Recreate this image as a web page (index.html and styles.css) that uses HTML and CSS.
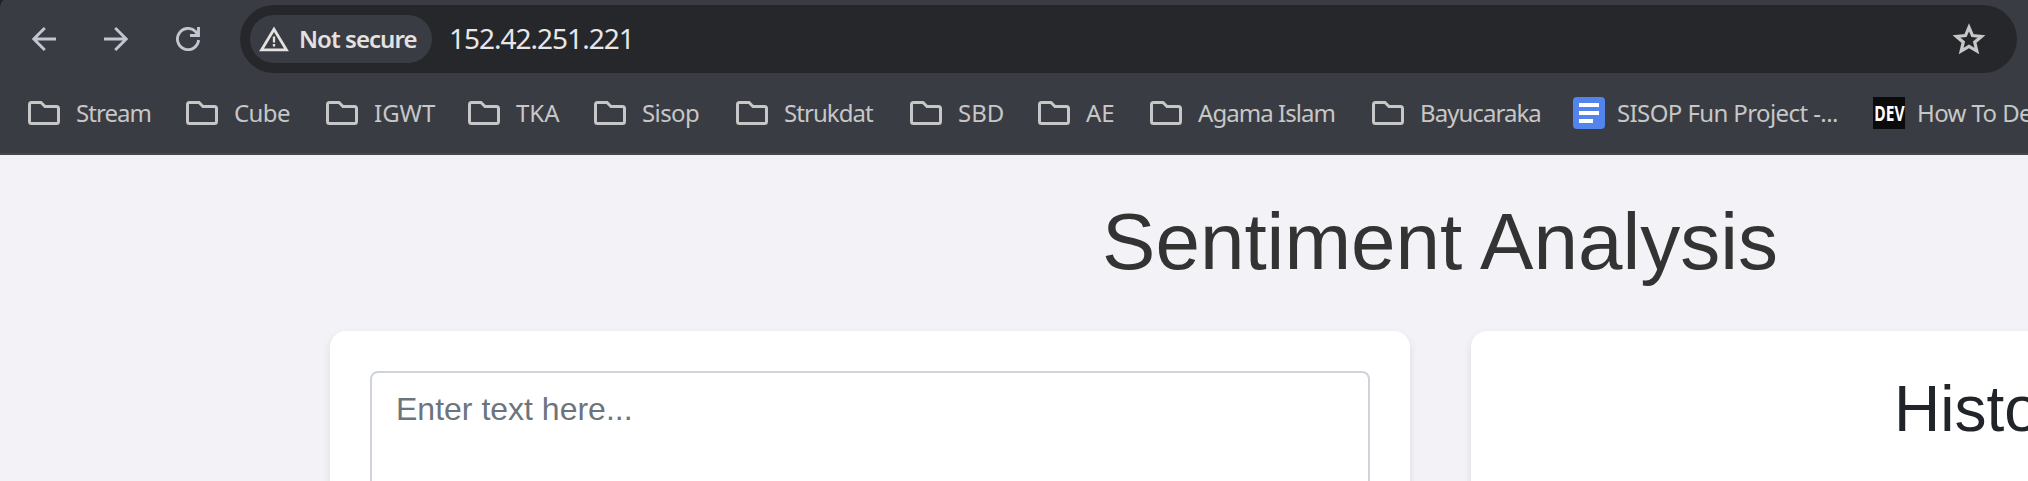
FILE: index.html
```
<!DOCTYPE html>
<html lang="en">
<head>
<meta charset="utf-8">
<title>Sentiment Analysis</title>
<link rel="stylesheet" href="styles.css">
</head>
<body>
<svg class="defs" width="0" height="0"><symbol id="folder" viewBox="0 0 32 24"><path d="M1.5 4V20.5Q1.5 22.5 3.5 22.5H28.5Q30.5 22.5 30.5 20.5V7.5Q30.5 5.5 28.5 5.5H17L13 1.5H3.5Q1.5 1.5 1.5 3.5Z" fill="none" stroke="currentColor" stroke-width="3"/></symbol></svg>
<div class="frame">
<header class="chrome">
  <div class="toolbar">
    <svg class="nav" viewBox="0 0 24 24"><path d="M24 12H2M12.8 1L1.8 12L12.8 23" fill="none" stroke="currentColor" stroke-width="2.9"/></svg>
    <svg class="nav" viewBox="0 0 24 24"><path d="M0 12H22M11.2 1L22.2 12L11.2 23" fill="none" stroke="currentColor" stroke-width="2.9"/></svg>
    <svg class="nav" viewBox="0 0 24 24"><path d="M22.6 13A10.6 10.6 0 1 1 19.6 4.6L22 8M22.5 0V8.5H14" fill="none" stroke="currentColor" stroke-width="2.9"/></svg>
    <div class="omnibox">
      <div class="chip">
        <svg class="warn" viewBox="0 0 30 26"><path d="M15 3.2L27.4 23.8H2.6Z" fill="none" stroke="currentColor" stroke-width="2.8"/><path d="M15 10.5V16.5M15 18V20.5" stroke="currentColor" stroke-width="2.3"/></svg>
        <span class="secure">Not secure</span>
      </div>
      <span class="url">152.42.251.221</span>
      <svg class="star" viewBox="0 0 34 32"><path d="M17 4.3L20.5 12.6L29.5 13.4L22.7 19.2L24.8 28L17 23.3L9.2 28L11.3 19.2L4.5 13.4L13.5 12.6Z" fill="none" stroke="currentColor" stroke-width="3.2"/></svg>
    </div>
  </div>
  <nav class="bookmarks">
    <a class="bm"><svg class="folder"><use href="#folder"/></svg><span class="tight">Stream</span></a>
    <a class="bm"><svg class="folder"><use href="#folder"/></svg><span class="snug">Cube</span></a>
    <a class="bm"><svg class="folder"><use href="#folder"/></svg><span>IGWT</span></a>
    <a class="bm"><svg class="folder"><use href="#folder"/></svg><span>TKA</span></a>
    <a class="bm"><svg class="folder"><use href="#folder"/></svg><span class="snug">Sisop</span></a>
    <a class="bm"><svg class="folder"><use href="#folder"/></svg><span class="tight">Strukdat</span></a>
    <a class="bm"><svg class="folder"><use href="#folder"/></svg><span>SBD</span></a>
    <a class="bm"><svg class="folder"><use href="#folder"/></svg><span>AE</span></a>
    <a class="bm"><svg class="folder"><use href="#folder"/></svg><span class="tight">Agama Islam</span></a>
    <a class="bm"><svg class="folder"><use href="#folder"/></svg><span class="tight">Bayucaraka</span></a>
    <a class="bm site"><svg class="favicon" viewBox="0 0 32 32"><rect width="32" height="32" rx="4" fill="#5383ec"/><path d="M6 8H26M6 16H26M6 24H20" stroke="#fff" stroke-width="4"/></svg><span class="snug">SISOP Fun Project -...</span></a>
    <a class="bm site"><b class="dev"><i>DEV</i></b><span class="snug">How To De</span></a>
  </nav>
</header>
</div>
<main class="page">
  <h1 class="title">Sentiment Analysis</h1>
  <div class="row">
    <section class="card"><textarea class="entry" placeholder="Enter text here..."></textarea></section>
    <section class="card"><h2 class="history">History</h2></section>
  </div>
</main>
</body>
</html>
```
FILE: styles.css
```
* { box-sizing: border-box; }
html { overflow: hidden; }
body { margin: 0; width: 2028px; height: 481px; overflow: hidden; background: #f3f2f7; font-family: "Liberation Sans", Arial, sans-serif; }
.defs { display: none; }
.frame { background: #202125; }
.chrome { height: 155px; background: #3a3c43; border-bottom: 2px solid #4a474b; border-top-left-radius: 4px 9px; font-family: "Noto Sans", sans-serif; color: #c7c7c7; }
.toolbar { display: flex; align-items: center; height: 78px; padding-left: 32px; gap: 48px; }
.nav { width: 24px; height: 24px; flex: none; color: #c3c5d0; }
.omnibox { display: flex; align-items: center; width: 1777px; height: 68px; margin-left: -8px; padding: 0 31px 0 10px; border-radius: 34px; background: #26272b; }
.chip { display: flex; align-items: center; gap: 10px; width: 182px; height: 48px; padding-left: 9px; border-radius: 24px; background: #3a3c43; color: #e5e1e1; }
.warn { width: 30px; height: 26px; flex: none; }
.secure { margin-top: -2px; font-size: 24px; font-weight: 600; letter-spacing: -0.95px; white-space: nowrap; }
.url { margin: -2px 0 0 17px; font-size: 28px; letter-spacing: -1px; color: #e8e6e6; }
.star { width: 34px; height: 32px; margin-left: auto; color: #c7c7c7; }
.bookmarks { display: grid; grid-template-columns: 158px 140px 142px 126px 142px 174px 128px 112px 222px 201px 300px 200px; padding-left: 28px; height: 70px; align-items: center; font-size: 24px; white-space: nowrap; }
.bm { display: flex; align-items: center; gap: 16px; height: 32px; }
.bm > span { margin-top: -2px; }
.site { gap: 12px; }
.tight { letter-spacing: -0.95px; }
.snug { letter-spacing: -0.6px; }
.folder { width: 32px; height: 24px; flex: none; }
.favicon { width: 32px; height: 32px; flex: none; }
.dev { display: flex; align-items: center; justify-content: center; width: 32px; height: 32px; flex: none; background: #0b0b0c; color: #fff; font-size: 21px; }
.dev i { font-style: normal; transform: scaleX(0.74); }
.page { width: 2880px; padding: 0 300px; }
.title { margin: 0; padding-top: 39px; height: 176px; text-align: center; font-size: 80px; font-weight: 400; line-height: 96px; color: #333; }
.row { display: grid; grid-template-columns: 1080px 1080px; gap: 61px; padding: 0 30px; }
.card { height: 400px; padding: 40px; border-radius: 16px; background: #fff; box-shadow: 0 4px 8px rgba(0,0,0,.1); }
.entry { display: block; width: 1000px; height: 300px; padding: 12px 24px; border: 2px solid #ced4da; border-radius: 8px; resize: none; font: 32px/48px "Liberation Sans", Arial, sans-serif; background: #fff; }
.entry::placeholder { color: #6c757d; opacity: 1; }
.history { margin: 0; padding-left: 383px; font-size: 64px; font-weight: 400; line-height: 76.8px; color: #212529; }
```
